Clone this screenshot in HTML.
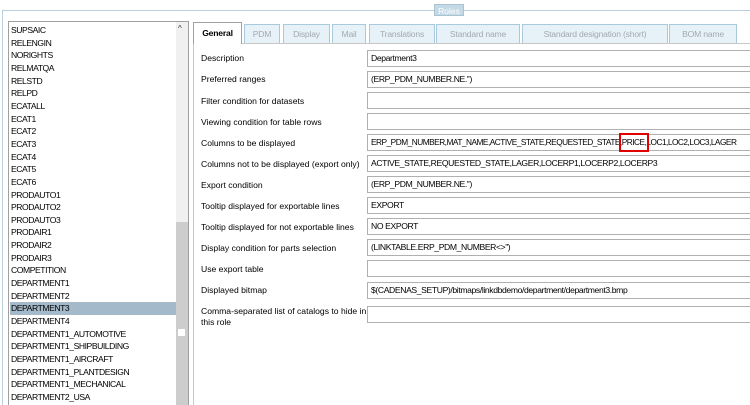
<!DOCTYPE html>
<html><head><meta charset="utf-8"><style>
*{margin:0;padding:0;box-sizing:border-box}
body{width:750px;height:405px;overflow:hidden;background:#fff;font-family:"Liberation Sans",sans-serif;font-size:9px;color:#000;position:relative}
.a{position:absolute}
.frame{left:2px;top:10px;width:748px;height:395px;border:1px solid #b9cfdc;border-right:none;border-bottom:none}
.roles{left:434px;top:4px;width:30px;height:12px;background:#c4d9e6;color:#fff;font-size:8.5px;text-align:center;line-height:12px;border:1px solid #a9c3d3}
.list{left:8px;top:21px;width:181px;height:384px;border:1px solid #a0a0a0;border-bottom:none;background:#fff}
.item{position:absolute;left:2px;height:13px;line-height:13px;font-size:8.6px;white-space:nowrap;letter-spacing:-0.45px}
.sel{background:#a4b9c9;left:1px;width:166px;padding-left:1px}
.sb{left:176px;top:22px;width:12px;height:383px;background:#f0f0f0}
.thumb{left:176px;top:222px;width:12px;height:183px;background:#cdcdcd}
.tab{position:absolute;top:24px;height:19px;border:1px solid #a9c9dd;border-bottom:none;background:#e6f1f8;color:#a3aab0;text-align:center;line-height:18px;font-size:8.6px;letter-spacing:-0.2px}
.gen{top:22px;height:22px;background:#fff;color:#000;font-weight:bold;border-color:#a0a0a0;line-height:21px;z-index:2}
.panel{left:193px;top:43px;width:557px;height:362px;border:1px solid #c8c8c8;border-right:none;border-bottom:none}
.lab{position:absolute;left:201px;font-size:8.6px;white-space:nowrap;line-height:11px}
.box{position:absolute;left:367px;width:383px;height:17px;border:1px solid #b0b0b0;border-right:none;background:#fff;font-size:8.6px;line-height:15px;padding-left:3px;white-space:nowrap;overflow:hidden;letter-spacing:-0.38px}
</style></head><body>
<div class="a frame"></div>
<div class="a roles">Roles</div>
<div class="a list">
<div class="item" style="top:2px">SUPSAIC</div>
<div class="item" style="top:14.7px">RELENGIN</div>
<div class="item" style="top:27.3px">NORIGHTS</div>
<div class="item" style="top:40px">RELMATQA</div>
<div class="item" style="top:52.6px">RELSTD</div>
<div class="item" style="top:65.3px">RELPD</div>
<div class="item" style="top:77.9px">ECATALL</div>
<div class="item" style="top:90.6px">ECAT1</div>
<div class="item" style="top:103.2px">ECAT2</div>
<div class="item" style="top:115.9px">ECAT3</div>
<div class="item" style="top:128.5px">ECAT4</div>
<div class="item" style="top:141.2px">ECAT5</div>
<div class="item" style="top:153.8px">ECAT6</div>
<div class="item" style="top:166.5px">PRODAUTO1</div>
<div class="item" style="top:179.1px">PRODAUTO2</div>
<div class="item" style="top:191.8px">PRODAUTO3</div>
<div class="item" style="top:204.4px">PRODAIR1</div>
<div class="item" style="top:217.1px">PRODAIR2</div>
<div class="item" style="top:229.7px">PRODAIR3</div>
<div class="item" style="top:242.4px">COMPETITION</div>
<div class="item" style="top:255px">DEPARTMENT1</div>
<div class="item" style="top:267.7px">DEPARTMENT2</div>
<div class="item sel" style="top:280.3px">DEPARTMENT3</div>
<div class="item" style="top:293px">DEPARTMENT4</div>
<div class="item" style="top:305.6px">DEPARTMENT1_AUTOMOTIVE</div>
<div class="item" style="top:318.3px">DEPARTMENT1_SHIPBUILDING</div>
<div class="item" style="top:330.9px">DEPARTMENT1_AIRCRAFT</div>
<div class="item" style="top:343.6px">DEPARTMENT1_PLANTDESIGN</div>
<div class="item" style="top:356.2px">DEPARTMENT1_MECHANICAL</div>
<div class="item" style="top:368.9px">DEPARTMENT2_USA</div>
</div>
<div class="a sb"></div>
<div class="a thumb"></div>
<div class="a" style="left:178px;top:24px;font-size:8px;color:#333">&#94;</div>
<div class="a" style="left:178px;top:329px;width:7px;height:7px;background:#fff"></div>
<div class="a panel"></div>
<div class="tab gen" style="left:193px;width:49px">General</div>
<div class="tab" style="left:244px;width:36px">PDM</div>
<div class="tab" style="left:283px;width:47px">Display</div>
<div class="tab" style="left:332px;width:34px">Mail</div>
<div class="tab" style="left:369px;width:66px">Translations</div>
<div class="tab" style="left:436px;width:84px">Standard name</div>
<div class="tab" style="left:522px;width:146px">Standard designation (short)</div>
<div class="tab" style="left:669px;width:68px">BOM name</div>

<div class="lab" style="top:53px">Description</div><div class="box" style="top:50px">Department3</div>
<div class="lab" style="top:74px">Preferred ranges</div><div class="box" style="top:71px">(ERP_PDM_NUMBER.NE.'')</div>
<div class="lab" style="top:96px">Filter condition for datasets</div><div class="box" style="top:92px"></div>
<div class="lab" style="top:117px">Viewing condition for table rows</div><div class="box" style="top:113px"></div>
<div class="lab" style="top:138px">Columns to be displayed</div><div class="box" style="top:134px;font-size:8.3px;letter-spacing:-0.5px">ERP_PDM_NUMBER,MAT_NAME,ACTIVE_STATE,REQUESTED_STATE,PRICE,LOC1,LOC2,LOC3,LAGER</div>
<div class="lab" style="top:159px">Columns not to be displayed (export only)</div><div class="box" style="top:155px">ACTIVE_STATE,REQUESTED_STATE,LAGER,LOCERP1,LOCERP2,LOCERP3</div>
<div class="lab" style="top:180px">Export condition</div><div class="box" style="top:176px">(ERP_PDM_NUMBER.NE.'')</div>
<div class="lab" style="top:201px">Tooltip displayed for exportable lines</div><div class="box" style="top:197px">EXPORT</div>
<div class="lab" style="top:222px">Tooltip displayed for not exportable lines</div><div class="box" style="top:218px">NO EXPORT</div>
<div class="lab" style="top:243px">Display condition for parts selection</div><div class="box" style="top:239px">(LINKTABLE.ERP_PDM_NUMBER&lt;&gt;'')</div>
<div class="lab" style="top:264px">Use export table</div><div class="box" style="top:260px"></div>
<div class="lab" style="top:285px">Displayed bitmap</div><div class="box" style="top:282px">$(CADENAS_SETUP)/bitmaps/linkdbdemo/department/department3.bmp</div>
<div class="lab" style="top:306px">Comma-separated list of catalogs to hide in<br>this role</div><div class="box" style="top:306px"></div>
<div class="a" style="left:619px;top:133px;width:30px;height:19px;border:2px solid #e00000"></div>
</body></html>
